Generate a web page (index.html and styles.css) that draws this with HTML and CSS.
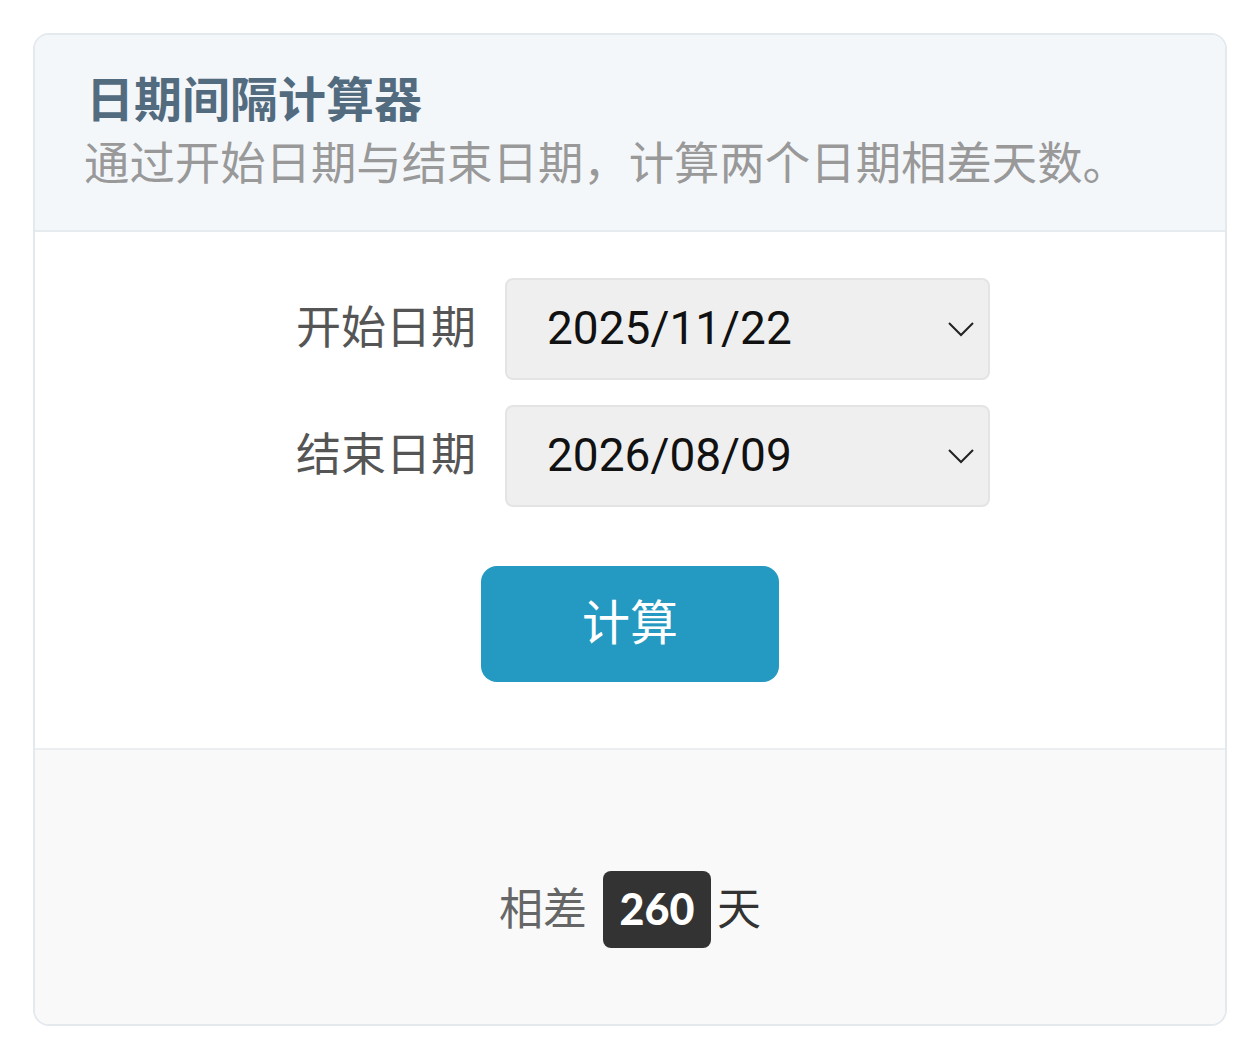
FILE: index.html
```html
<!DOCTYPE html>
<html lang="zh-CN">
<head>
<meta charset="utf-8">
<title>日期间隔计算器</title>
<link rel="stylesheet" href="styles.css">
</head>
<body>
<div class="card">
  <div class="card-header">
    <h1 class="title">日期间隔计算器</h1>
    <p class="subtitle">通过开始日期与结束日期，计算两个日期相差天数。</p>
  </div>
  <div class="card-body">
    <div class="form-row">
      <label class="label">开始日期</label>
      <div class="picker">
        <span class="picker-value">2025/11/22</span>
        <svg class="chevron" width="28" height="16" viewBox="0 0 28 16"><path d="M2 2 L14 14 L26 2" fill="none" stroke="#222" stroke-width="2"/></svg>
      </div>
    </div>
    <div class="form-row">
      <label class="label">结束日期</label>
      <div class="picker">
        <span class="picker-value">2026/08/09</span>
        <svg class="chevron" width="28" height="16" viewBox="0 0 28 16"><path d="M2 2 L14 14 L26 2" fill="none" stroke="#222" stroke-width="2"/></svg>
      </div>
    </div>
    <div class="actions">
      <button class="btn">计算</button>
    </div>
  </div>
  <div class="card-footer">
    <div class="result">
      <span class="result-label">相差</span>
      <span class="badge">260</span>
      <span class="result-unit">天</span>
    </div>
  </div>
</div>
</body>
</html>
```
FILE: styles.css
```css
html, body {
  margin: 0;
  padding: 0;
  background: #ffffff;
}
body {
  font-family: "Noto Sans CJK SC", "Noto Sans", sans-serif;
  padding: 33px 32px 18px 33px;
}
.card {
  border: 2px solid #e4e9ee;
  border-radius: 16px;
  overflow: hidden;
  background: #fff;
}
.card-header {
  background: #f4f7fa;
  border-bottom: 2px solid #e6ebf0;
  padding: 28px 52px 38px 51px;
}
.title {
  margin: 0;
  font-size: 48px;
  line-height: 1.4;
  font-weight: 700;
  color: #536b7f;
}
.subtitle {
  margin: 0 0 0 -2px;
  font-size: 45.4px;
  line-height: 1.36;
  color: #999;
  white-space: nowrap;
}
.card-body {
  padding: 46px 0 66px 0;
  display: flex;
  flex-direction: column;
  align-items: center;
}
.form-row {
  display: flex;
  align-items: center;
  margin-bottom: 25px;
}
.form-row + .form-row {
  margin-bottom: 0;
}
.label {
  width: 206px;
  margin-right: 29px;
  padding-bottom: 8px;
  text-align: right;
  font-size: 45px;
  color: #555;
  line-height: 1.4;
}
.picker {
  box-sizing: border-box;
  width: 485px;
  height: 102px;
  background: #efefef;
  border: 2px solid #e4e4e4;
  border-radius: 8px;
  display: flex;
  align-items: center;
  justify-content: space-between;
  padding: 0 13px 0 40px;
}
.picker-value {
  font-family: Roboto, "Noto Sans", sans-serif;
  font-size: 46px;
  color: #111;
  padding-bottom: 2px;
}
.chevron {
  display: block;
}
.actions {
  margin-top: 59px;
}
.btn {
  width: 298px;
  height: 116px;
  border: none;
  border-radius: 16px;
  background: #2499c1;
  color: #fff;
  font-family: "Noto Sans CJK SC", sans-serif;
  font-size: 48px;
  padding: 0 0 9px 0;
}
.card-footer {
  background: #f9f9f9;
  border-top: 2px solid #eceff2;
  height: 276px;
  box-sizing: border-box;
  padding-top: 121px;
  display: flex;
  justify-content: center;
}
.result {
  display: flex;
  align-items: center;
  height: 77px;
}
.result-label {
  font-size: 44px;
  color: #666;
  padding-bottom: 6px;
}
.badge {
  margin: 0 6px 0 16px;
  background: #333;
  color: #fff;
  border-radius: 8px;
  height: 77px;
  width: 108px;
  display: flex;
  align-items: center;
  justify-content: center;
  font-family: Lato, "Noto Sans", sans-serif;
  font-weight: 900;
  font-size: 43px;
  padding-bottom: 2px;
  box-sizing: border-box;
}
.result-unit {
  font-size: 44px;
  color: #333;
  padding-bottom: 6px;
}
```
